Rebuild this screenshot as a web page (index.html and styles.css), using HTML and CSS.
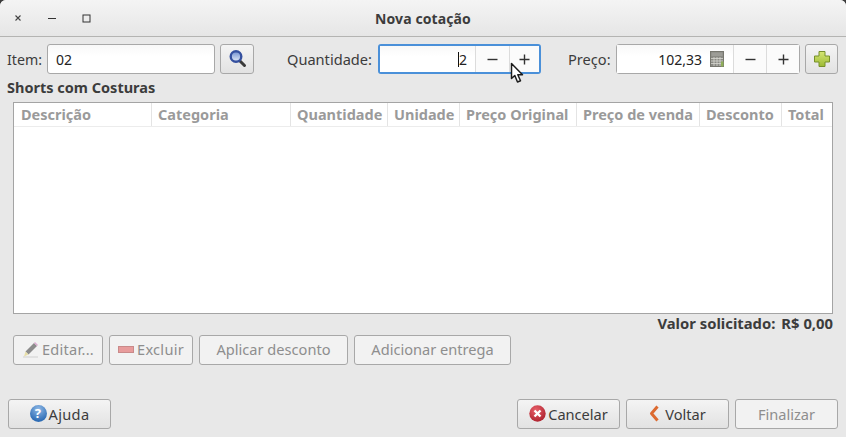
FILE: index.html
```html
<!DOCTYPE html>
<html lang="pt">
<head>
<meta charset="utf-8">
<title>Nova cotação</title>
<link rel="stylesheet" href="styles.css">
</head>
<body>
<div class="window">
  <header class="titlebar">
    <div class="controls">
      <span class="ctl"><svg width="8" height="8" viewBox="0 0 8 8"><path d="M1.500 1.500l5 5M6.500 1.500l-5 5" stroke="#444" stroke-width="1.100"/></svg></span>
      <span class="ctl"><svg width="10" height="8" viewBox="0 0 10 8"><path d="M1 4.500h8" stroke="#333" stroke-width="1"/></svg></span>
      <span class="ctl"><svg width="9" height="9" viewBox="0 0 9 9"><rect x="1" y="1" width="7" height="7" fill="none" stroke="#333" stroke-width="1"/></svg></span>
    </div>
    <h1 class="title">Nova cotação</h1>
    <div></div>
  </header>
  <main class="content">
    <div class="form-row">
      <label class="lbl lbl-item">Item:</label>
      <div class="field field-item">02</div>
      <button class="btn btn-search"><svg width="20" height="20" viewBox="0 0 20 20"><defs><linearGradient id="lens" x1="0" y1="0" x2="0" y2="1"><stop offset="0" stop-color="#6f8ed0"/><stop offset="1" stop-color="#e6edf8"/></linearGradient></defs><path d="M13 12l4.500 4.500" stroke="#3a3a3a" stroke-width="3" stroke-linecap="round"/><circle cx="9" cy="7.500" r="5.300" fill="url(#lens)" stroke="#35509f" stroke-width="2.400"/></svg></button>
      <label class="lbl lbl-qty">Quantidade:</label>
      <div class="spin spin-qty">
        <div class="spin-value"><span class="caret-text">2</span></div>
        <span class="spin-btn spin-minus"><svg width="11" height="11" viewBox="0 0 11 11"><path d="M0.500 5.500h10" stroke="#333" stroke-width="1.400"/></svg></span>
        <span class="spin-btn spin-plus"><svg width="11" height="11" viewBox="0 0 11 11"><path d="M0.500 5.500h10M5.500 0.500v10" stroke="#333" stroke-width="1.400"/></svg></span>
      </div>
      <label class="lbl lbl-price">Preço:</label>
      <div class="spin spin-price">
        <div class="spin-value">102,33
          <svg class="calc" width="14" height="16" viewBox="0 0 14 16"><rect x="0.500" y="0.500" width="13" height="15" fill="#8a8a84" stroke="#77776f"/><rect x="1.500" y="1.500" width="11" height="3.500" fill="#9c9c96"/><path d="M1 7.500h12M1 10h12M1 12.500h12M4 6v9M7 6v9M10 6v9" stroke="#d8d8d2" stroke-width="0.800"/><rect x="11" y="10.500" width="2.500" height="5" fill="#8fae5a"/></svg>
        </div>
        <span class="spin-btn"><svg width="11" height="11" viewBox="0 0 11 11"><path d="M0.500 5.500h10" stroke="#333" stroke-width="1.400"/></svg></span>
        <span class="spin-btn"><svg width="11" height="11" viewBox="0 0 11 11"><path d="M0.500 5.500h10M5.500 0.500v10" stroke="#333" stroke-width="1.400"/></svg></span>
      </div>
      <button class="btn btn-add"><svg width="18" height="18" viewBox="0 0 18 18"><defs><linearGradient id="plus" x1="0" y1="0" x2="0" y2="1"><stop offset="0" stop-color="#d6e675"/><stop offset="1" stop-color="#9cba34"/></linearGradient></defs><path d="M6 1.500h6v4.500h4.500v6h-4.500v4.500h-6v-4.500h-4.500v-6h4.500z" fill="url(#plus)" stroke="#77902a" stroke-linejoin="round"/></svg></button>
    </div>
    <div class="item-name">Shorts com Costuras</div>
    <div class="table">
      <div class="thead">
        <span class="th">Descrição</span>
        <span class="th">Categoria</span>
        <span class="th">Quantidade</span>
        <span class="th">Unidade</span>
        <span class="th">Preço Original</span>
        <span class="th">Preço de venda</span>
        <span class="th">Desconto</span>
        <span class="th">Total</span>
      </div>
    </div>
    <div class="total"><span>Valor solicitado:</span><span>R$ 0,00</span></div>
    <div class="actions">
      <button class="btn b-off b-editar" disabled><svg width="17" height="17" viewBox="0 0 17 17"><path d="M1 16h15" stroke="#d0d0d0" stroke-width="1"/><path d="M3.500 10.500L12 2l3 3-8.500 8.500z" fill="#8c8c8c"/><path d="M12 2l1-1 3 3-1 1z" fill="#dcaad0"/><path d="M3.500 10.500l3 3L2 15.500z" fill="#e8dfa8"/></svg>Editar...</button>
      <button class="btn b-off b-excluir" disabled><svg width="16" height="7" viewBox="0 0 16 7"><rect x="0.500" y="0.500" width="15" height="6" fill="#e89c9c" stroke="#c98a8a"/></svg>Excluir</button>
      <button class="btn b-off b-aplicar" disabled>Aplicar desconto</button>
      <button class="btn b-off b-entrega" disabled>Adicionar entrega</button>
    </div>
    <footer class="footer">
      <button class="btn b-foot b-ajuda"><span class="help">?</span>Ajuda</button>
      <span class="spacer"></span>
      <button class="btn b-foot"><svg width="17" height="17" viewBox="0 0 17 17"><defs><radialGradient id="red" cx=".4" cy=".3" r=".8"><stop offset="0" stop-color="#e8606a"/><stop offset="1" stop-color="#a81c28"/></radialGradient></defs><circle cx="8.500" cy="8.500" r="8.200" fill="url(#red)"/><path d="M5.500 5.500l6 6M11.500 5.500l-6 6" stroke="#fff" stroke-width="2.400"/></svg>Cancelar</button>
      <button class="btn b-foot b-voltar"><svg width="11" height="17" viewBox="0 0 11 17"><path d="M8.500 1.500L2.500 8.500l6 7" fill="none" stroke="#dc6a30" stroke-width="3" stroke-linejoin="round"/></svg>Voltar</button>
      <button class="btn b-foot b-off" disabled>Finalizar</button>
    </footer>
  </main>
  <svg class="cursor" width="16" height="22" viewBox="0 0 16 22"><path d="M1.500 1.500v15l3.300-3 2.700 6.500 3-1.300-2.700-6h4.700z" fill="#fff" stroke="#1c1c1c" stroke-width="1.500" stroke-linejoin="round"/></svg>
</div>
</body>
</html>
```
FILE: styles.css
```css
* { box-sizing: border-box; }
html, body { margin: 0; padding: 0; }
body { width: 846px; height: 437px; background: #3c3c3c; font-family: "Noto Sans", "Open Sans", sans-serif; font-size: 14px; color: #3c3c3c; overflow: hidden; }
.window { position: relative; width: 846px; height: 437px; background: #e8e8e8; border-radius: 6px 6px 0 0; overflow: hidden; }
.titlebar { height: 37px; display: grid; grid-template-columns: 1fr auto 1fr; align-items: center; background: linear-gradient(#f4f4f4, #e6e6e6); border-bottom: 1px solid #b4b4b2; }
.controls { display: flex; padding-left: 1px; }
.ctl { width: 34px; height: 34px; display: flex; align-items: center; justify-content: center; }
.title { margin: 0; font-size: 14px; font-weight: 700; color: #3c3c3c; letter-spacing: .1px; }
.content { padding: 7px 8px 8px 7px; display: flex; flex-direction: column; height: 400px; }
.form-row { display: flex; align-items: center; height: 30px; }
.lbl { white-space: nowrap; font-size: 14.6px; }
.lbl-item { width: 40px; font-size: 14.2px; }
.field { height: 30px; background: linear-gradient(#f8f8f8, #fff 40%); border: 1px solid #a8a8a8; border-radius: 3px; display: flex; align-items: center; color: #222; }
.field-item { width: 168px; padding-left: 8px; }
.btn { font: inherit; font-size: 14.6px; color: #3c3c3c; background: linear-gradient(#f4f4f4, #e2e2e2); border: 1px solid #a8a8a8; border-radius: 3px; padding: 0; height: 30px; display: flex; align-items: center; justify-content: center; gap: 2px; white-space: nowrap; }
.btn-search { width: 34px; margin-left: 5px; }
.lbl-qty { width: 91px; margin-left: 33px; }
.spin { display: flex; height: 30px; background: #fff; border: 1px solid #a8a8a8; border-radius: 3px; }
.spin-qty { width: 163px; border: 2px solid #4a90d9; }
.spin-price { width: 184px; }
.spin-value { flex: 1; display: flex; align-items: center; justify-content: flex-end; gap: 8px; padding-right: 8px; color: #222; background: linear-gradient(#f8f8f8, #fff 40%); }
.spin-price .spin-value { padding-right: 9px; }
.spin-btn { width: 33px; display: flex; align-items: center; justify-content: center; border-left: 1px solid #dcdcdc; background: #fbfbfb; }
.spin-minus { width: 34px; }
.spin-plus { width: 30px; }
.caret-text { border-left: 1px solid #111; line-height: 15px; }
.lbl-price { width: 48px; margin-left: 27px; }
.btn-add { width: 33px; margin-left: 5px; }
.item-name { font-weight: 700; font-size: 14.5px; height: 28px; line-height: 26px; }
.table { margin-left: 6px; margin-right: 5px; height: 212px; background: #fff; border: 1px solid #a4a4a4; }
.thead { display: grid; grid-template-columns: 137px 139px 97px 72px 117px 123px 82px 51px; height: 24px; border-bottom: 1px solid #ececec; }
.th { font-weight: 700; font-size: 14.5px; color: #9a9a9a; padding-left: 6px; line-height: 23px; border-left: 1px solid #e4e4e4; white-space: nowrap; overflow: hidden; }
.th:first-child { border-left: 0; padding-left: 7px; }
.total { display: flex; justify-content: flex-end; gap: 6px; font-weight: 700; font-size: 14.8px; height: 21px; line-height: 18px; padding-right: 5px; }
.actions { display: flex; gap: 6px; padding-left: 6px; }
.actions .btn { padding-bottom: 2px; gap: 3px; }
.b-off { background: #f2f2f2; color: #8e8e8e; border-color: #a8a8a8; }
.b-editar { width: 90px; letter-spacing: .25px; }
.b-excluir { width: 84px; letter-spacing: .25px; }
.b-aplicar { width: 149px; }
.b-entrega { width: 157px; }
.footer { display: flex; gap: 6px; margin-top: 34px; padding-left: 1px; }
.spacer { flex: 1; }
.b-foot { width: 103px; padding-bottom: 1px; }
.b-ajuda { letter-spacing: .3px; }
.b-voltar { gap: 5px; }
.help { width: 17px; height: 17px; border-radius: 50%; background: radial-gradient(circle at 50% 25%, #8fb9e6, #2f6db5 75%); color: #fff; font-size: 13px; font-weight: 700; line-height: 17px; text-align: center; }
.cursor { position: absolute; left: 510px; top: 62px; }
```
